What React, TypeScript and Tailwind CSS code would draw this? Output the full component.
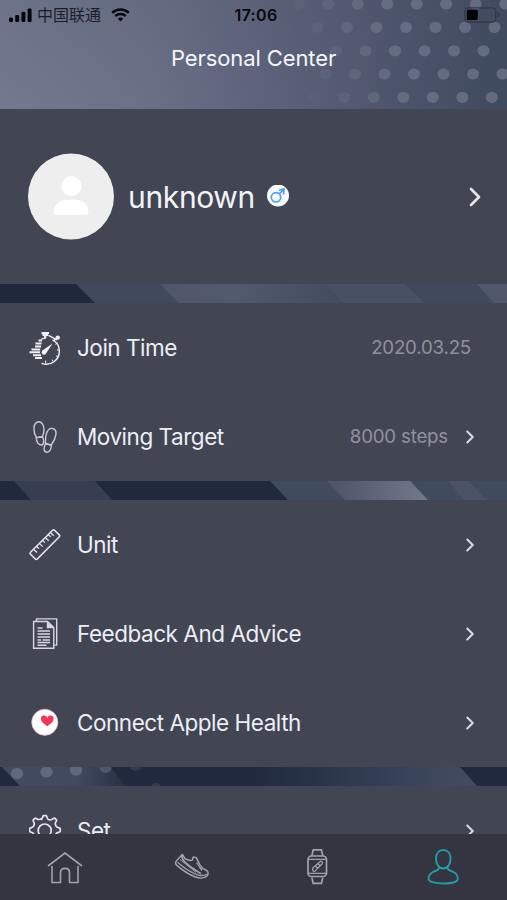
import type { ReactNode } from 'react';
import { ChevronRight } from 'lucide-react';

const dotRows = [
  { y: 4, start: 298.7, count: 8 },
  { y: 27.3, start: 288, count: 8 },
  { y: 50.8, start: 336, count: 6 },
  { y: 74, start: 325.5, count: 7 },
  { y: 97.3, start: 314.8, count: 7 },
];

function HeaderBackdrop() {
  return (
    <svg className="absolute inset-0" width="507" height="109" viewBox="0 0 507 109">
      <defs>
        <linearGradient id="sky" gradientUnits="userSpaceOnUse" x1="0" y1="40" x2="490" y2="120">
          <stop offset="0" stopColor="#747a90" />
          <stop offset="0.3" stopColor="#6b7187" />
          <stop offset="0.6" stopColor="#5b6079" />
          <stop offset="0.82" stopColor="#4c546b" />
          <stop offset="1" stopColor="#414b60" />
        </linearGradient>
        <linearGradient id="shade" x1="0" y1="0" x2="0" y2="1">
          <stop offset="0" stopColor="#3d4358" stopOpacity="0.15" />
          <stop offset="1" stopColor="#3d4358" stopOpacity="0" />
        </linearGradient>
      </defs>
      <rect width="507" height="109" fill="url(#sky)" />
      <rect width="507" height="109" fill="url(#shade)" />
      {dotRows.map((row) =>
        Array.from({ length: row.count }, (_, i) => {
          const x = row.start + i * 29.5;
          const opacity = Math.max(0.06, Math.min(0.8, (x + (109 - row.y) * 0.3 - 300) / 140));
          return <ellipse key={`${row.y}-${i}`} cx={x} cy={row.y} rx="6" ry="5.6" fill="#6d7389" opacity={opacity} />;
        })
      )}
    </svg>
  );
}

function StatusBar() {
  return (
    <div className="relative flex h-[30px] items-center justify-between pl-[9px] pr-[7px] text-[#08090d]">
      <div className="flex w-[150px] items-center">
        <svg width="23" height="14" viewBox="0 0 23 14" fill="currentColor">
          <rect x="0" y="9.5" width="4" height="4.5" rx="1.2" />
          <rect x="6.2" y="7" width="4" height="7" rx="1.2" />
          <rect x="12.4" y="3.8" width="4" height="10.2" rx="1.2" />
          <rect x="18.6" y="0.5" width="4" height="13.5" rx="1.2" />
        </svg>
        <span className="ml-[5px] text-[16px] leading-none text-[#1c1e27]">中国联通</span>
        <svg className="ml-[10px]" width="19" height="14" viewBox="0 0 19 14" fill="none" stroke="currentColor">
          <path d="M1.2 4.8a12.2 12.2 0 0 1 16.6 0" strokeWidth="2.5" />
          <path d="M4.3 8a7.8 7.8 0 0 1 10.4 0" strokeWidth="2.4" />
          <path d="M9.5 13.5 6.8 10.8a4 4 0 0 1 5.4 0z" fill="currentColor" stroke="none" />
        </svg>
      </div>
      <span className="pl-[3px] text-[16px] font-semibold leading-none tracking-[0.3px]">17:06</span>
      <div className="flex w-[150px] justify-end">
        <svg width="37" height="16" viewBox="0 0 37 16">
          <rect x="1.8" y="0.8" width="31" height="14.2" rx="3.6" fill="none" stroke="#343849" strokeWidth="1.3" />
          <rect x="3.8" y="2.8" width="11" height="10.2" rx="1.5" fill="#000" />
          <path d="M34.4 5.2c1.600.6 2.200 1.600 2.200 2.700s-.6 2.100-2.200 2.700z" fill="#343849" />
        </svg>
      </div>
    </div>
  );
}

function StopwatchIcon() {
  return (
    <svg width="34" height="34" viewBox="0 0 34 34" fill="none" stroke="#eef0f6" strokeWidth="1.4">
      <path d="M12.500 2.200h7.500M13.500 3.800h5.500M16.200 4v3" strokeWidth="2.200" />
      <path d="m19.500 4.300 8.500 4.500M25 9.500l2.500-2.800" />
      <circle cx="28.800" cy="6.600" r="1.500" fill="#eef0f6" />
      <path d="M12.400 8.300c1.500-.8 3-1.200 4.500-1.200" />
      <path d="M23.500 8.800A12.600 12.600 0 0 1 30.300 19.400 13 13 0 0 1 12.600 32.300" />
      <path d="M16.700 29.500v3M23 28.500l1.200 2M27 24.800l2.200 1M28 19h2.200M26.500 13.300l2.300-1.400" strokeWidth="1" />
      <path d="M9.500 9.500h3.500M6.500 12.400h6M6 15.400h6M2.500 18.400h8.700M.5 21.300h10.500M4 24.200h8M6 27.100h7" strokeWidth="2" />
      <path d="M23.500 12.500 14.500 18.800a2.500 2.500 0 1 0 3 3z" fill="#eef0f6" stroke="none" />
    </svg>
  );
}

function FootprintsIcon() {
  return (
    <svg width="34" height="34" viewBox="0 0 34 34" fill="none" stroke="#c9ccd6" strokeWidth="1.400">
      <path d="M9.200 1.800c3.500-.5 5.900 3.500 5.800 8 0 3-.8 5.300-1.600 7l-6 .8C4.700 13.500 3 3.200 9.200 1.800z" />
      <path d="m7.400 17.600 6-.8c1.700 3.500 1.900 7.700-.8 8.200-3.300.5-5.500-3.600-5.200-7.400z" />
      <path d="M23.500 8.500c-4.800-.9-7.700 6-6.900 15.200l5.700 1.300c4.700-6.700 7.200-15.300 1.200-16.500z" />
      <path d="m16.600 23.700 5.700 1.300c.2 4.500-1.900 7.700-4.900 7.100-3.300-.8-2.600-5-.8-8.400z" />
    </svg>
  );
}

function RulerIcon() {
  return (
    <svg className="-ml-px mr-px" width="34" height="34" viewBox="0 0 34 34" fill="none" stroke="#e4e6ee" strokeWidth="1.600" strokeLinejoin="round">
      <path d="M24.600 2.300c.6-.6 1.300-.6 1.900 0l4.700 4.600c.7.700.7 1.300.1 1.900L9.300 31c-.7.7-1.300.7-2 0l-4.800-4.700c-.7-.7-.7-1.300 0-2z" />
      <path d="m5.800 21.500 3.200 3M8.700 18.500l2.200 2M11.600 15.600l3.200 3M14.600 12.600l2.200 2M17.500 9.700l3.200 3M20.400 6.700l2.200 2M22.500 4.500l3.200 3.200" strokeWidth="1.300" />
    </svg>
  );
}

function DocumentIcon() {
  return (
    <svg width="34" height="34" viewBox="0 0 34 34" fill="none" stroke="#d5d8e1" strokeWidth="1.400">
      <path d="M7.500 4.300V1.900h20.200v26.200h-2.500" />
      <path d="M18.500 4.500H4.600v26.800h20.200V10.500zM18.500 4.500v6h6.300" />
      <path d="M19.500 6.500v3h3.300z" fill="#d5d8e1" />
      <path d="M8.500 11h5M8.500 14h12.500M8.500 17h12.500M8.500 20h12.500M8.500 23h3.500M13.500 23h7.500M8.500 25.600h12.500M8.500 28.200h9" strokeWidth="1.500" />
    </svg>
  );
}

function HealthIcon() {
  return (
    <svg width="34" height="34" viewBox="0 0 34 34">
      <circle cx="15.800" cy="16.300" r="13.100" fill="#fff" stroke="#e8abc0" strokeWidth="0.700" />
      <path d="M18.300 20.300c-4.500-3.300-6.200-4.700-6.200-7a3.100 3.100 0 0 1 6.200-1.300 3.100 3.100 0 0 1 6.200 1.300c0 2.300-1.700 3.700-6.200 7z" fill="#fb3458" />
    </svg>
  );
}

function GearIcon() {
  return (
    <svg width="34" height="34" viewBox="0 0 34 34" fill="none" stroke="#e4e6ee" strokeWidth="1.700" strokeLinejoin="round">
      <path d="M12.700 5.300c.9-.4 1-3.500 1.600-3.700h3c.7.200.7 3.300 1.700 3.700 1 .5 2.300.9 3.200.5 1-.5 2.800-2 3.500-1.700l1.900 2c.3.700-1.700 2.700-1.300 3.800.3 1 .7 2.200 1.400 3 .8.700 3.400.8 3.500 1.500v3.100c-.3.800-3 .8-3.600 1.600-.6.800-1.100 2-1.200 3 0 1 1.500 2.700 1.100 3.500l-2 1.900c-.8.300-2.500-1.600-3.600-1.300-1 .2-2.200.7-3 1.300-.7.800-.9 3.500-1.600 3.700h-3c-.8-.2-.8-2.900-1.600-3.600-.9-.7-2.100-1.100-3.100-1.400-1.100-.1-2.800 1.600-3.500 1.300l-2-2c-.3-.7 1.500-2.500 1.200-3.500-.2-1-.6-2.200-1.300-3-.7-.7-3.200-.9-3.400-1.500v-3c.2-.7 2.800-.9 3.400-1.700.7-.7 1.200-2 1.300-3 .1-1-1.500-2.900-1.200-3.600l2-2c.7-.3 2.500 1.500 3.600 1.300 1 0 2.100-.5 3-1.200z" />
      <circle cx="15.700" cy="16.500" r="6.500" />
    </svg>
  );
}

type StripProps = { base: string; children: ReactNode };

function Strip({ base, children }: StripProps) {
  return (
    <svg className="block shrink-0" width="507" height="19" viewBox="0 0 507 19">
      <rect width="507" height="19" fill={base} />
      {children}
    </svg>
  );
}

type RowProps = { icon: ReactNode; label: string; value?: string; arrow?: boolean };

function Row({ icon, label, value, arrow = true }: RowProps) {
  return (
    <div className="flex h-[89px] shrink-0 items-center pl-[29px]">
      {icon}
      <span className="ml-[14px] pt-[2px] text-[22.5px] leading-none tracking-[-0.47px] text-[#eceef5]">{label}</span>
      <span className="ml-auto pt-[2px] text-[18.7px] leading-none tracking-[-0.2px] text-[#8f929d]">{value}</span>
      {arrow ? (
        <ChevronRight className="ml-[11px] mr-[26px] h-[22px] w-[22px] text-[#d9dbe2]" strokeWidth={2.2} />
      ) : (
        <span className="w-[36px]" />
      )}
    </div>
  );
}

function TabBar() {
  return (
    <nav className="flex h-[66px] shrink-0 items-center justify-around bg-[#343541] text-[#a0a2ae]">
      <svg className="ml-[2px] -mr-[2px]" width="36" height="36" viewBox="0 0 36 36" fill="none" stroke="currentColor" strokeWidth="1.600">
        <path d="M1 17 18 4l17 13" />
        <path d="M5 17v16.500h8.500V23.500c0-5.500 9-5.500 9 0v10H31V17" />
      </svg>
      <svg className="ml-[2px] -mr-[2px]" width="36" height="36" viewBox="0 0 36 36" fill="none" stroke="currentColor" strokeWidth="1.500" strokeLinejoin="round">
        <path d="M8.300 5.500 2.800 11.500c-1.500 1.600-1.600 3.200-.3 4.600 6.500 5.500 12 9.300 19 11.900 5 1.800 9.800.9 11.900-1.500 1.300-2 .6-4.300-1-5.200-3.500-1.300-5-2.700-6.500-5.500l-3.500-7-3.200-.9-.8 3.200c-3 1-5.200-.3-7.200-1.300z" />
        <path d="M8.300 5.500c-.6 2.500-.2 4.300 1.200 6 5.500 6.500 12.500 9.500 17.500 13.200" strokeWidth="1.800" />
        <path d="M3.500 13.200c6.500 5.700 12.300 10.500 21.700 13.100 3.500.5 5.500.3 7.800-1.100M22.500 13.500l3 4.500 2.500 3.500" strokeWidth="1.300" />
        <path d="m6 10.500 16 13" strokeWidth="1" />
      </svg>
      <svg width="36" height="36" viewBox="0 0 36 36" fill="none" stroke="currentColor" strokeWidth="1.700">
        <path d="m12.800 7 1.400-6.200h8.200L23.800 7M12.800 28.500l1.400 5.800h8.200l1.400-5.800" />
        <rect x="9" y="7" width="18.500" height="20.500" rx="3.500" />
        <path d="M9 10.400h18.500M9 24.300h18.500" strokeWidth="1.300" />
        <path d="m14 18.800 7.200-6.300c1.600-.8 3 .9 2 2.200l-7.200 7.400c-1.800 1.300-3.400-1.800-2-3.300zM16.500 17l2.500 2.500M19 14.700l2.500 2.500" strokeWidth="1.300" />
      </svg>
      <svg className="-ml-px mr-px text-[#229da3]" width="36" height="36" viewBox="0 0 36 36" fill="none" stroke="currentColor" strokeWidth="1.900">
        <path d="M18.300 1c4.400 0 7.300 3.500 7.300 8.500 0 5.800-3 10-7.300 10s-7.300-4.200-7.300-10C11 4.500 13.900 1 18.300 1z" />
        <path d="M14 18.500v.8c0 2-3 2.300-6 3.700-4 2-4.600 4.500-4.300 7.300.4 2.700 7.700 4.200 14.600 4.200s14.100-1.300 14.400-4.200c.3-2.800-.2-5.300-4.200-7.300-3-1.400-6-1.700-6-3.700v-.8" />
      </svg>
    </nav>
  );
}

export default function App() {
  return (
    <div className="flex h-[900px] w-[507px] flex-col overflow-hidden bg-[#424653] font-['Inter','Noto_Sans_CJK_SC',sans-serif]">
      <header className="relative h-[109px] shrink-0">
        <HeaderBackdrop />
        <StatusBar />
        <h1 className="relative mt-[17px] text-center text-[22px] leading-[22px] tracking-[-0.1px] text-[#f5f6fb]">Personal Center</h1>
      </header>

      <main className="flex min-h-0 flex-1 flex-col overflow-hidden">
        {/* Profile */}
        <section className="flex h-[175px] shrink-0 items-center pl-[28px] pr-[16px]">
          <svg width="86" height="87" viewBox="0 0 86 87">
            <circle cx="43" cy="43.500" r="43" fill="#eeeeee" />
            <circle cx="43.500" cy="33" r="10" fill="#fff" />
            <path d="M25.800 59c0-8 7-12.500 17.500-12.500S60.500 51 60.500 59c0 2-1 2.800-2.800 2.800H28.500c-1.800 0-2.700-.8-2.700-2.800z" fill="#fff" />
          </svg>
          <span className="ml-[14px] text-[30px] leading-none tracking-[-0.35px] text-[#f2f3f9]">unknown</span>
          <svg className="ml-[11px]" width="24" height="24" viewBox="0 0 24 24" fill="none" stroke="#4b9df5" strokeWidth="1.700">
            <circle cx="12" cy="10.500" r="11" fill="#f8fbff" stroke="none" />
            <circle cx="10" cy="12.300" r="4.700" />
            <path d="m13.300 8.800 4.200-4.300M13 5.300l5-1.300-.5 5.300" />
          </svg>
          <ChevronRight className="ml-auto h-[32px] w-[32px] text-[#e3e5eb]" strokeWidth={2} />
        </section>

        <Strip base="#414a5d">
          <path d="M0 0h76l19 19H0z" fill="#20283b" />
          <path d="M160 0h164l20 19H179z" fill="url(#band)" />
          <path d="M324 0h81l19 19h-80z" fill="#485064" />
          <path d="M477 0h30v19h-13z" fill="#52586b" />
          <defs>
            <linearGradient id="band">
              <stop offset="0" stopColor="#50566a" />
              <stop offset="0.400" stopColor="#525a6e" />
              <stop offset="1" stopColor="#414a5f" />
            </linearGradient>
          </defs>
        </Strip>

        <Row icon={<StopwatchIcon />} label="Join Time" value="2020.03.25" arrow={false} />
        <Row icon={<FootprintsIcon />} label="Moving Target" value="8000 steps" />

        <Strip base="#414b5e">
          <path d="M0 0h270l18 19H0z" fill="#20293d" />
          <path d="M14 0h81l17 19H31z" fill="#373e53" />
          <path d="M327 0h83l18 19h-83z" fill="url(#glint)" />
          <path d="M448 0h21l17 19h-22z" fill="#4c5265" />
          <defs>
            <linearGradient id="glint">
              <stop offset="0" stopColor="#4c5367" />
              <stop offset="1" stopColor="#74788b" />
            </linearGradient>
          </defs>
        </Strip>

        <Row icon={<RulerIcon />} label="Unit" />
        <Row icon={<DocumentIcon />} label="Feedback And Advice" />
        <Row icon={<HealthIcon />} label="Connect Apple Health" />

        <Strip base="#20293d">
          <path d="M2 0h108l16 19H20z" fill="url(#fadeOut)" />
          <path d="M253 0h207l17 19H253z" fill="url(#fadeIn)" />
          <ellipse cx="17" cy="6.500" rx="6.200" ry="5.500" fill="#62687d" />
          <ellipse cx="46.500" cy="5" rx="6.200" ry="5.500" fill="#62687d" />
          <ellipse cx="76" cy="3" rx="6.200" ry="5.500" fill="#62687d" />
          <ellipse cx="105.500" cy="1" rx="6" ry="5" fill="#50576c" />
          <ellipse cx="135.500" cy="-1" rx="6" ry="5" fill="#30384c" />
          <ellipse cx="156" cy="20" rx="5" ry="4" fill="#343c50" />
          <defs>
            <linearGradient id="fadeOut">
              <stop offset="0" stopColor="#414b5f" />
              <stop offset="0.600" stopColor="#434a60" />
              <stop offset="1" stopColor="#283044" />
            </linearGradient>
            <linearGradient id="fadeIn">
              <stop offset="0" stopColor="#20293d" />
              <stop offset="0.600" stopColor="#354056" />
              <stop offset="1" stopColor="#454c61" />
            </linearGradient>
          </defs>
        </Strip>

        <Row icon={<GearIcon />} label="Set" />
      </main>

      <TabBar />
    </div>
  );
}
